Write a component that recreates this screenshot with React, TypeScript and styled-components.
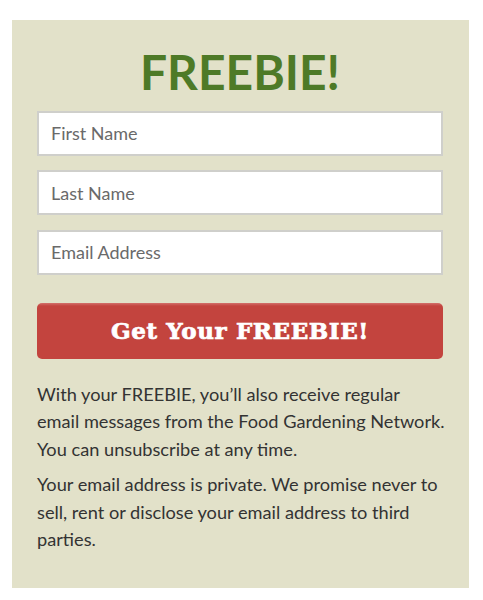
import React from "react";
import styled, { createGlobalStyle } from "styled-components";

const GlobalStyle = createGlobalStyle`
    html, body {
        margin: 0;
        padding: 0;
        background: #ffffff;
    }

    * {
        box-sizing: border-box;
    }
`;

const fields = ["First Name", "Last Name", "Email Address"];

const App = () => {
    return (
        <>
            <GlobalStyle />
            <StyledPage>
                <StyledPanel>
                    <StyledTitle>FREEBIE!</StyledTitle>
                    <StyledForm onSubmit={(e) => e.preventDefault()}>
                        {fields.map((field) => (
                            <StyledInput
                                key={field}
                                type={field === "Email Address" ? "email" : "text"}
                                placeholder={field}
                            />
                        ))}
                        <StyledSubmitBtn type="submit">Get Your FREEBIE!</StyledSubmitBtn>
                    </StyledForm>
                    <StyledNote>
                        With your FREEBIE, you’ll also receive regular
                        <br />
                        email messages from the Food Gardening Network. You can unsubscribe
                        at any time.
                    </StyledNote>
                    <StyledNote>
                        Your email address is private. We promise never to sell, rent or
                        disclose your email address to third parties.
                    </StyledNote>
                </StyledPanel>
            </StyledPage>
        </>
    );
};

export default App;

const StyledPage = styled.main`
    padding: 20px 14px 14px 12px;
    font-family: Lato, "Open Sans", sans-serif;
`;

const StyledPanel = styled.section`
    width: 457px;
    padding: 23px 22px 34px 25px;
    background-color: #e2e1c9;
`;

const StyledTitle = styled.h1`
    margin: 0 4px 10px 0;
    font-size: 48px;
    line-height: 1.2;
    font-weight: 700;
    text-align: center;
    color: #4e7a27;
`;

const StyledForm = styled.form`
    display: flex;
    flex-direction: column;
    gap: 14.5px;
    margin-right: 4px;
`;

const StyledInput = styled.input`
    width: 100%;
    height: 45px;
    padding: 0 12px;
    border: 2px solid #cfcfcb;
    background-color: #ffffff;
    font-family: Lato, sans-serif;
    font-size: 18px;
    color: #333333;
    outline: none;

    &::placeholder {
        color: #6a6a6a;
    }
`;

const StyledSubmitBtn = styled.button`
    margin-top: 13.5px;
    width: 100%;
    height: 56px;
    border: none;
    border-radius: 5px;
    background: linear-gradient(#d3706b 0, #c3443e 3px, #c3443e 100%);
    color: #ffffff;
    font-family: "DejaVu Serif", serif;
    font-weight: 700;
    font-size: 23px;
    letter-spacing: 0.6px;
    -webkit-text-stroke: 0.7px #ffffff;
    cursor: pointer;
`;

const StyledNote = styled.p`
    margin: 22px 0 0;
    font-size: 18.2px;
    line-height: 27.5px;
    color: #333333;

    & + & {
        margin-top: 8px;
    }
`;
